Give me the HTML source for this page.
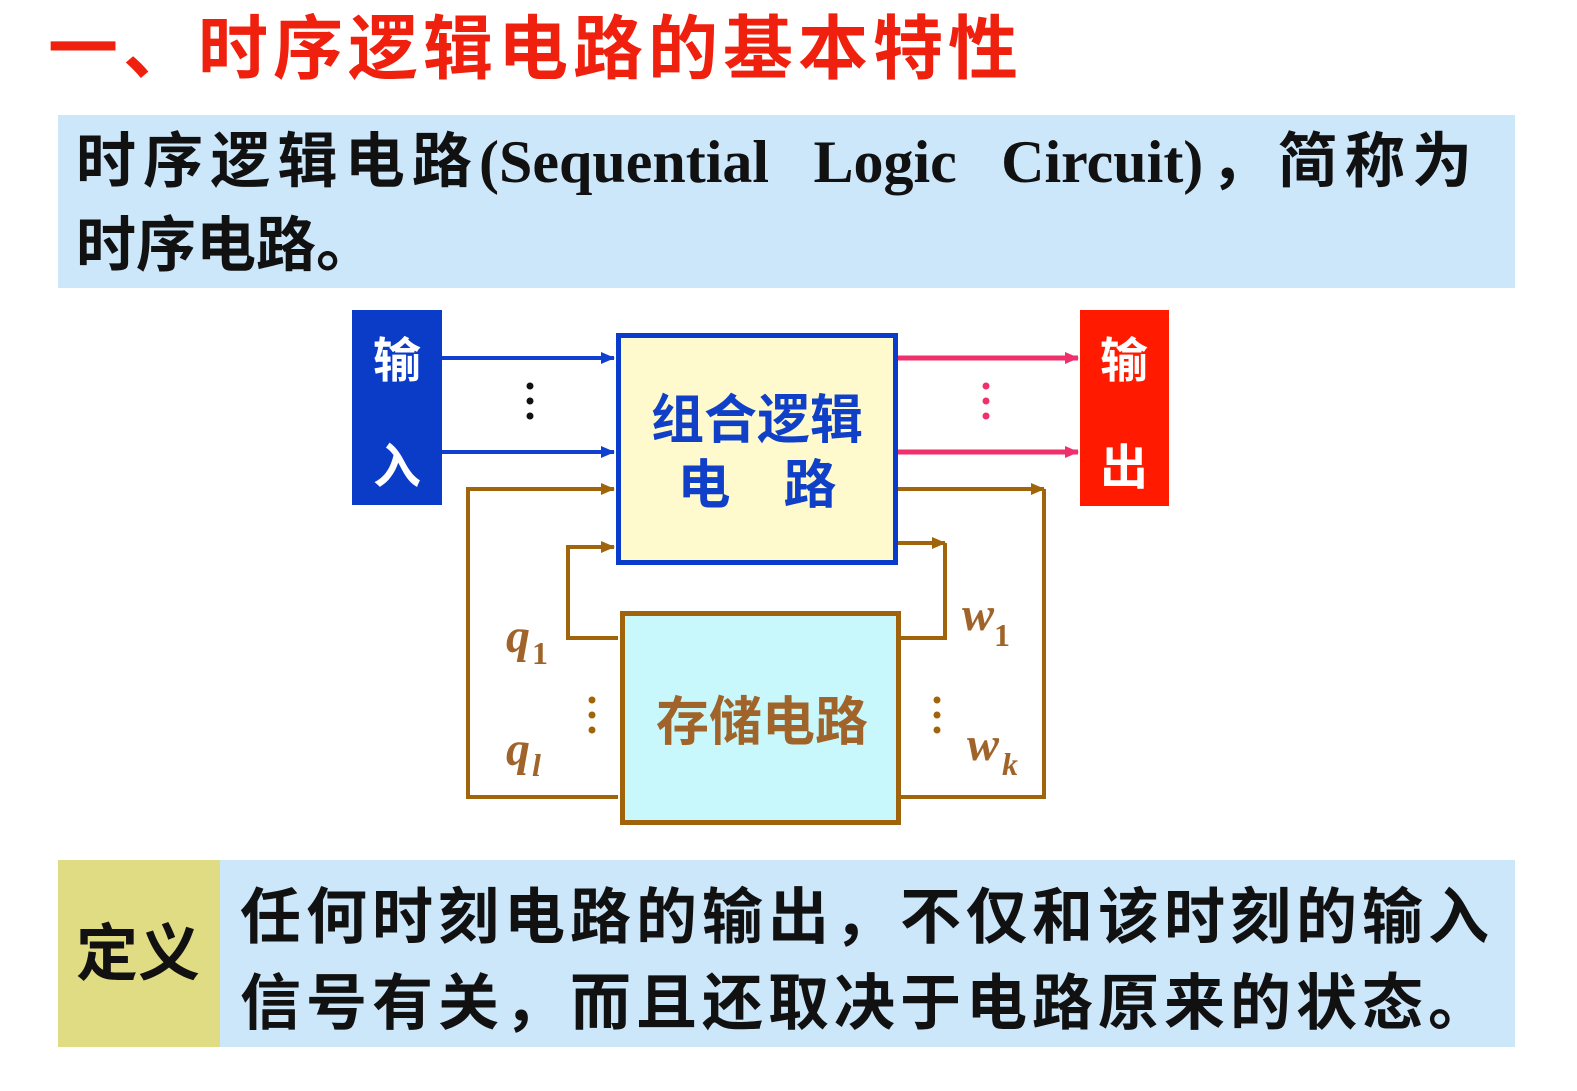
<!DOCTYPE html>
<html><head><meta charset="utf-8"><style>
body{margin:0;width:1577px;height:1091px;background:#fff;position:relative;overflow:hidden;font-family:"Liberation Sans","Noto Sans CJK SC",sans-serif}
.a{position:absolute}
</style></head><body>
<div class="a" style="left:48px;top:6px;font-size:70px;font-weight:bold;color:#f0200e;letter-spacing:5px;white-space:nowrap;line-height:86px">一、时序逻辑电路的基本特性</div>
<div class="a" style="left:58px;top:115px;width:1457px;height:173px;background:#cce6fa"></div>
<div class="a" style="left:76px;top:120px;width:1396px;font-family:'Liberation Serif','Noto Sans CJK SC',serif;font-weight:bold;font-size:60px;line-height:84px;color:#111;text-align:justify;text-align-last:justify;white-space:nowrap">时序逻辑电路(Sequential&nbsp; Logic&nbsp; Circuit)，简称为</div>
<div class="a" style="left:76px;top:204px;font-family:'Liberation Serif','Noto Sans CJK SC',serif;font-weight:bold;font-size:60px;line-height:84px;color:#111">时序电路。</div>

<svg class="a" style="left:0;top:0" width="1577" height="1091">
<defs>
<marker id="ab" markerWidth="14" markerHeight="12" refX="13" refY="6" orient="auto" markerUnits="userSpaceOnUse"><path d="M0 0L14 6L0 12z" fill="#1040d0"/></marker>
<marker id="ar" markerWidth="14" markerHeight="12" refX="13" refY="6" orient="auto" markerUnits="userSpaceOnUse"><path d="M0 0L14 6L0 12z" fill="#f0306a"/></marker>
<marker id="ao" markerWidth="14" markerHeight="12" refX="13" refY="6" orient="auto" markerUnits="userSpaceOnUse"><path d="M0 0L14 6L0 12z" fill="#a0640a"/></marker>
</defs>
<rect x="352" y="310" width="90" height="195" fill="#0b3cc8"/>
<rect x="1080" y="310" width="89" height="196" fill="#ff1a00"/>
<g stroke="#1040d0" stroke-width="4"><line x1="442" y1="358" x2="614" y2="358" marker-end="url(#ab)"/><line x1="442" y1="452" x2="614" y2="452" marker-end="url(#ab)"/></g>
<g stroke="#f0306a" stroke-width="5"><line x1="898" y1="358" x2="1078" y2="358" marker-end="url(#ar)"/><line x1="898" y1="452" x2="1078" y2="452" marker-end="url(#ar)"/></g>
<g fill="none" stroke="#a0640a" stroke-width="4">
<polyline points="618,797 468,797 468,489 614,489" marker-end="url(#ao)"/>
<polyline points="618,638 568,638 568,547 614,547" marker-end="url(#ao)"/>
<polyline points="898,489 1044,489" marker-end="url(#ao)"/>
<polyline points="1044,489 1044,797 900,797"/>
<polyline points="898,543 945,543" marker-end="url(#ao)"/>
<polyline points="945,543 945,638 900,638"/>
</g>
<rect x="618.5" y="335.5" width="277" height="227" fill="#fffacd" stroke="#0a3ccc" stroke-width="5"/>
<rect x="622.5" y="613.5" width="276" height="209" fill="#c8f8fc" stroke="#a0620a" stroke-width="5"/>
<g fill="#111"><circle cx="530" cy="386" r="3.5"/><circle cx="530" cy="401" r="3.5"/><circle cx="530" cy="416" r="3.5"/></g>
<g fill="#f0306a"><circle cx="986" cy="386" r="3.5"/><circle cx="986" cy="401" r="3.5"/><circle cx="986" cy="416" r="3.5"/></g>
<g fill="#a0640a"><circle cx="592" cy="700" r="3.5"/><circle cx="592" cy="715" r="3.5"/><circle cx="592" cy="730" r="3.5"/><circle cx="937" cy="700" r="3.5"/><circle cx="937" cy="715" r="3.5"/><circle cx="937" cy="730" r="3.5"/></g>
<g font-family="Liberation Sans,Noto Sans CJK SC,sans-serif" font-weight="bold">
<text x="397" y="377" font-size="48" fill="#fff" text-anchor="middle">输</text>
<text x="397" y="483" font-size="48" fill="#fff" text-anchor="middle">入</text>
<text x="1124" y="377" font-size="48" fill="#fff" text-anchor="middle">输</text>
<text x="1124" y="484" font-size="48" fill="#fff" text-anchor="middle">出</text>
<text x="757" y="438" font-size="53" fill="#1040c8" text-anchor="middle">组合逻辑</text>
<text x="757" y="503" font-size="53" fill="#1040c8" text-anchor="middle">电　路</text>
<text x="762" y="740" font-size="53" fill="#a0642a" text-anchor="middle">存储电路</text>
</g>
<g font-family="Liberation Serif,serif" font-style="italic" font-weight="bold" fill="#a0642a">
<text x="506" y="652" font-size="48">q</text><text x="532" y="664" font-size="32" font-style="normal">1</text>
<text x="506" y="765" font-size="48">q</text><text x="532" y="776" font-size="32">l</text>
<text x="962" y="630" font-size="48">w</text><text x="994" y="646" font-size="32" font-style="normal">1</text>
<text x="967" y="760" font-size="48">w</text><text x="1002" y="775" font-size="32">k</text>
</g>
</svg>

<div class="a" style="left:58px;top:860px;width:162px;height:187px;background:#e0dc84"></div>
<div class="a" style="left:220px;top:860px;width:1295px;height:187px;background:#cce6fa"></div>
<div class="a" style="left:76px;top:918px;font-size:62px;font-weight:bold;color:#111;line-height:74px">定义</div>
<div class="a" style="left:240px;top:874px;font-size:61px;font-weight:bold;color:#111;line-height:86px;letter-spacing:5px;white-space:nowrap">任何时刻电路的输出，不仅和该时刻的输入<br>信号有关，而且还取决于电路原来的状态。</div>
</body></html>
